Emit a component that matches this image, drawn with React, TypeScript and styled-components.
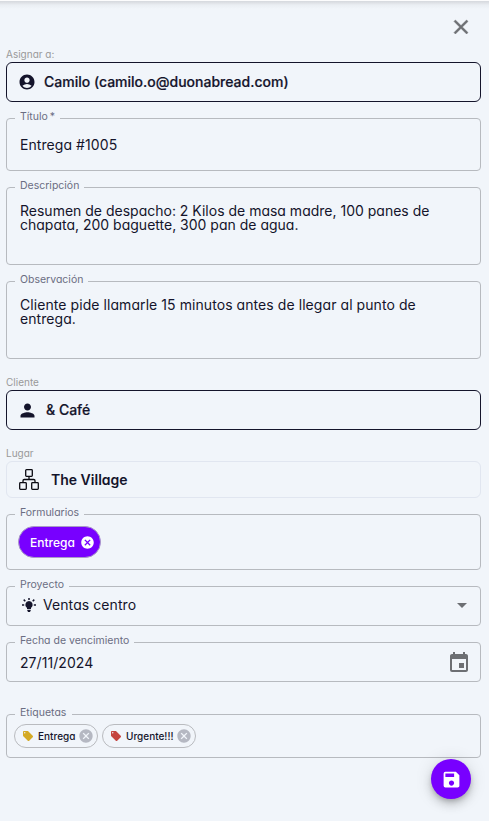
import React from "react";
import styled, { createGlobalStyle } from "styled-components";
import {
  MdClose,
  MdAccountCircle,
  MdPerson,
  MdCancel,
  MdArrowDropDown,
  MdEvent,
  MdSave,
  MdLocalOffer,
} from "react-icons/md";

const INK = "#14142b";
const PAGE = "#f1f5fa";

const GlobalStyle = createGlobalStyle`
  *, *::before, *::after { box-sizing: border-box; }
  body {
    margin: 0;
    background: ${PAGE};
    color: ${INK};
    font-family: Inter, "Liberation Sans", sans-serif;
    font-feature-settings: "cv11";
  }
`;

const Panel = styled.main`
  position: relative;
  display: flex;
  flex-direction: column;
  width: 489px;
  height: 821px;
  padding: 0 8px 0 6px;
  overflow: hidden;
  background: linear-gradient(#fcfcfd 0 1px, #d6d9de 1px, #dfe2e7 3px, #eaeef3 5px, ${PAGE} 9px);
`;

const Header = styled.header`
  display: flex;
  justify-content: flex-end;
  height: 47px;
  padding: 15px 8px 0 0;
`;

const IconButton = styled.button`
  display: flex;
  padding: 0;
  border: 0;
  background: none;
  color: #6d6f73;
  font-size: 24px;
  height: 24px;

  path:last-child {
    stroke: currentColor;
    stroke-width: 0.5px;
  }
`;

const Caption = styled.span<{ $gap?: number }>`
  display: block;
  height: 15px;
  margin-top: ${(p) => p.$gap ?? 0}px;
  color: #999;
  font-size: 10px;
  line-height: 14px;
`;

const Picker = styled.div<{ $soft?: boolean; $gap: number; $inset?: number }>`
  display: flex;
  align-items: center;
  gap: ${(p) => p.$gap}px;
  flex: none;
  height: ${(p) => (p.$soft ? 37 : 40)}px;
  padding: 0 ${(p) => p.$inset ?? 12}px;
  border: 1px solid ${(p) => (p.$soft ? "#e1e6f0" : INK)};
  border-radius: 6px;
`;

const PlaceName = styled.span`
  font-size: 14px;
  font-weight: 600;
  line-height: 20px;
`;

const PersonName = styled(PlaceName)`
  font-weight: 500;
  font-feature-settings: normal;
  -webkit-text-stroke: 0.2px ${INK};
`;

const Field = styled.div<{ $height: number; $top?: number; $align?: string; $pad?: string }>`
  position: relative;
  display: flex;
  align-items: ${(p) => p.$align ?? "center"};
  flex: none;
  height: ${(p) => p.$height}px;
  margin-top: ${(p) => p.$top ?? 16}px;
  padding: ${(p) => p.$pad ?? "0 13px"};
  border: 1px solid #b7babf;
  border-radius: 4px;
`;

const FieldLabel = styled.label<{ $width: number }>`
  position: absolute;
  top: -9px;
  left: 8px;
  width: ${(p) => p.$width}px;
  padding-left: 5px;
  background: ${PAGE};
  color: #6b6d82;
  font-size: 10.5px;
  line-height: 14px;
  white-space: nowrap;
`;

const Value = styled.span<{ $spacing?: number }>`
  font-size: 14px;
  line-height: 14px;
  letter-spacing: ${(p) => p.$spacing ?? 0}px;
  white-space: pre-line;
`;

const Trailing = styled.span<{ $right?: number }>`
  display: flex;
  margin-left: auto;
  margin-right: ${(p) => p.$right ?? 0}px;
  color: #6d6f73;
  font-size: 24px;
`;

const FormChip = styled.span`
  display: flex;
  align-items: center;
  justify-content: space-between;
  width: 83px;
  height: 32px;
  padding: 0 5px 0 11px;
  border: 1px solid #a99bc6;
  border-radius: 16px;
  background: #7800ff;
  color: #fff;
  font-size: 12px;
  font-weight: 500;
`;

const TagChip = styled.span<{ $width: number }>`
  display: flex;
  align-items: center;
  width: ${(p) => p.$width}px;
  height: 24px;
  margin-right: 4px;
  padding: 0 3px 0 7px;
  border: 1px solid #b9bbbf;
  border-radius: 12px;
  font-size: 10px;
  font-weight: 500;
`;

const TagIcon = styled(MdLocalOffer)<{ $tone: string }>`
  flex: none;
  margin-right: 4px;
  color: ${(p) => p.$tone};
  font-size: 12px;
`;

const ChipRemove = styled(MdCancel)`
  flex: none;
  margin-left: auto;
  color: #b5b8c2;
  font-size: 16px;
`;

const Fab = styled.button`
  position: absolute;
  right: 18px;
  bottom: 22px;
  display: flex;
  align-items: center;
  justify-content: center;
  width: 40px;
  height: 40px;
  padding: 0;
  border: 0;
  border-radius: 50%;
  background: #7800ff;
  color: #fff;
  font-size: 21px;
  box-shadow: 0 3px 5px -1px rgba(0, 0, 0, 0.2), 0 6px 10px rgba(0, 0, 0, 0.14),
    0 1px 18px rgba(0, 0, 0, 0.12);
`;

const BulbSvg = styled.svg`
  flex: none;
  margin: 0 7px 0 2px;
`;

const Bulb = () => (
  <BulbSvg width="14" height="14" viewBox="0 0 14 14" fill={INK}>
    <path d="M7 3a3.9 3.9 0 0 1 2 7.1v.8H5v-.8A3.9 3.9 0 0 1 7 3zM5.3 11.8h3.4v1L7.9 14H6.1l-.8-1.2z" />
    <path
      d="M7 0v1.9M0 7h2.2M11.8 7H14M1.7 1.6l1.6 1.6M12.3 1.6l-1.6 1.6"
      stroke={INK}
      strokeWidth="1.5"
    />
  </BulbSvg>
);

const Sitemap = () => (
  <svg width="20" height="21" viewBox="0 0 20 21" fill="none" stroke="#0b0b12" strokeWidth="1.3">
    <rect x="6.7" y="0.7" width="6.6" height="6.6" rx="0.8" />
    <rect x="0.7" y="13.7" width="6.6" height="6.6" rx="0.8" />
    <rect x="12.7" y="13.7" width="6.6" height="6.6" rx="0.8" />
    <path d="M10 7.3v3.2M4 13.7v-2q0-1.2 1.2-1.2h9.6q1.2 0 1.2 1.2v2" />
  </svg>
);

export default function App() {
  return (
    <Panel>
      <GlobalStyle />
      <Header>
        <IconButton aria-label="Cerrar">
          <MdClose />
        </IconButton>
      </Header>

      <Caption>Asignar a:</Caption>
      <Picker $gap={8} $inset={11}>
        <MdAccountCircle size={18} />
        <PersonName>Camilo (camilo.o@duonabread.com)</PersonName>
      </Picker>

      <Field $height={53}>
        <FieldLabel $width={45}>Título&#8201;*</FieldLabel>
        <Value $spacing={0.07}>Entrega #1005</Value>
      </Field>

      <Field $height={78} $align="flex-start" $pad="16px 13px">
        <FieldLabel $width={69}>Descripción</FieldLabel>
        <Value>
          {"Resumen de despacho: 2 Kilos de masa madre, 100 panes de\nchapata, 200 baguette, 300 pan de agua."}
        </Value>
      </Field>

      <Field $height={78} $align="flex-start" $pad="16px 13px">
        <FieldLabel $width={73}>Observación</FieldLabel>
        <Value $spacing={0.07}>
          {"Cliente pide llamarle 15 minutos antes de llegar al punto de\nentrega."}
        </Value>
      </Field>

      <Caption $gap={16}>Cliente</Caption>
      <Picker $gap={8} $inset={10}>
        <MdPerson size={21} />
        <PersonName>&amp; Café</PersonName>
      </Picker>

      <Caption $gap={16}>Lugar</Caption>
      <Picker $soft $gap={12}>
        <Sitemap />
        <PlaceName>The Village</PlaceName>
      </Picker>

      <Field $height={56} $pad="0 11px">
        <FieldLabel $width={69}>Formularios</FieldLabel>
        <FormChip>
          Entrega
          <MdCancel size={15} />
        </FormChip>
      </Field>

      <Field $height={40} $pad="0 13px 2px">
        <FieldLabel $width={54}>Proyecto</FieldLabel>
        <Bulb />
        <Value $spacing={0.08}>Ventas centro</Value>
        <Trailing $right={-7}>
          <MdArrowDropDown />
        </Trailing>
      </Field>

      <Field $height={40} $pad="1px 13px 0">
        <FieldLabel $width={119}>Fecha de vencimiento</FieldLabel>
        <Value $spacing={0.06}>27/11/2024</Value>
        <Trailing $right={-4}>
          <MdEvent />
        </Trailing>
      </Field>

      <Field $height={44} $top={32} $pad="0 7px">
        <FieldLabel $width={57}>Etiquetas</FieldLabel>
        <TagChip $width={84}>
          <TagIcon $tone="#d4aa25" />
          Entrega
          <ChipRemove />
        </TagChip>
        <TagChip $width={94}>
          <TagIcon $tone="#c5443f" />
          Urgente!!!
          <ChipRemove />
        </TagChip>
      </Field>

      <Fab aria-label="Guardar">
        <MdSave />
      </Fab>
    </Panel>
  );
}
